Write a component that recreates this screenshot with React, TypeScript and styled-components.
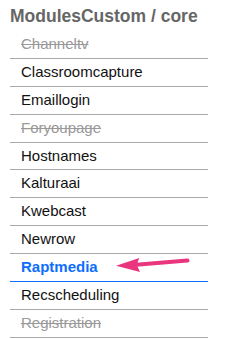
import styled, { createGlobalStyle } from "styled-components";

const GlobalStyle = createGlobalStyle`
  body {
    margin: 0;
    background: #fff;
    font-family: "Liberation Sans", Arial, sans-serif;
  }
`;

type Module = { name: string; disabled?: boolean; active?: boolean };

const modules: Module[] = [
  { name: "Channeltv", disabled: true },
  { name: "Classroomcapture" },
  { name: "Emaillogin" },
  { name: "Foryoupage", disabled: true },
  { name: "Hostnames" },
  { name: "Kalturaai" },
  { name: "Kwebcast" },
  { name: "Newrow" },
  { name: "Raptmedia", active: true },
  { name: "Recscheduling" },
  { name: "Registration", disabled: true },
];

const App = () => {
  return (
    <Wrapper>
      <GlobalStyle />
      <Heading>ModulesCustom / core</Heading>
      <List>
        {modules.map((m) => (
          <Item key={m.name} $active={m.active} $disabled={m.disabled}>
            {m.name}
            {m.active && (
              <Arrow width="78" height="20" viewBox="0 0 78 20">
                <line
                  x1="22"
                  y1="8.8"
                  x2="73.5"
                  y2="4.6"
                  stroke="#e8357e"
                  strokeWidth="4"
                  strokeLinecap="round"
                />
                <polygon points="2,9.7 25.3,2 22.7,8.8 26,16" fill="#e8357e" />
              </Arrow>
            )}
          </Item>
        ))}
      </List>
    </Wrapper>
  );
};

export default App;

const Wrapper = styled.div`
  padding: 0 0 0 10px;
  width: 198px;
`;

const Heading = styled.h2`
  margin: 6px 0 4px;
  font-size: 17.5px;
  font-weight: 700;
  color: #666;
`;

const List = styled.ul`
  list-style: none;
  margin: 0;
  padding: 0;
`;

const Item = styled.li<{ $active?: boolean; $disabled?: boolean }>`
  position: relative;
  padding: 4px 0 5.65px 11px;
  font-size: 15px;
  line-height: 17.25px;
  border-bottom: 1px solid ${(p) => (p.$active ? "#0d6efd" : "#aaa")};
  color: ${(p) => (p.$active ? "#0d6efd" : p.$disabled ? "#999" : "#111")};
  font-weight: ${(p) => (p.$active ? 700 : 400)};
  text-decoration: ${(p) => (p.$disabled ? "line-through" : "none")};
`;

const Arrow = styled.svg`
  position: absolute;
  left: 104px;
  top: 2px;
`;
